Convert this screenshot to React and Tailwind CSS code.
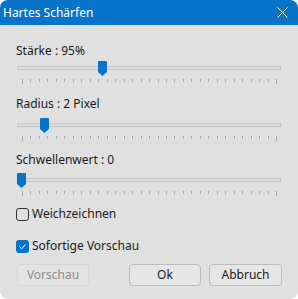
import React, { useState } from 'react';

const TICKS = Array.from({ length: 31 }, (_, i) => i);

const Slider = ({ label, thumbX, labelClass }) => {
  return (
    <div>
      <div className={`pl-[16px] h-[16px] text-[12px] leading-[16px] text-[#1a1a1a] ${labelClass}`}>{label}</div>
      <div className="relative h-[24px] w-[298px]">
        <div className="absolute left-[17px] top-[5px] h-[4px] w-[264px] border border-[#c6c6c6] bg-[#dadada]" />
        {TICKS.map((i) => (
          <div
            key={i}
            className="absolute top-[18px] w-px bg-[#a9a9a9]"
            style={{ left: 22 + Math.round(i * 8.47), height: i === 0 || i === 30 ? 5 : 3 }}
          />
        ))}
        <svg className="absolute top-0" style={{ left: thumbX }} width="9" height="15" viewBox="0 0 9 15">
          <path d="M1 0 H8 Q9 0 9 1 V11 L4.5 15 L0 11 V1 Q0 0 1 0 Z" fill="#0773c9" />
        </svg>
      </div>
    </div>
  );
};

const Checkbox = ({ checked, onChange, label }) => (
  <label className="flex items-center h-[16px] cursor-default" onClick={onChange}>
    <span
      className={`ml-[16px] w-[13px] h-[13px] rounded-[3px] flex items-center justify-center ${
        checked ? 'bg-[#0773c9]' : 'border border-[#333333] bg-[#e0e0e0]'
      }`}
    >
      {checked && (
        <svg width="9" height="9" viewBox="0 0 9 9">
          <path d="M1.5 4.8 L3.6 6.8 L7.6 2.4" fill="none" stroke="#ffffff" strokeWidth="1" />
        </svg>
      )}
    </span>
    <span className="ml-[3px] text-[12px] leading-[16px] text-[#1a1a1a]">{label}</span>
  </label>
);

const App = () => {
  const [soft, setSoft] = useState(false);
  const [preview, setPreview] = useState(true);

  return (
    <div className="w-[298px] h-[299px] bg-white" style={{ fontFamily: '"Noto Sans", "Open Sans", sans-serif' }}>
      <div className="w-[298px] h-[299px] rounded-[8px] overflow-hidden bg-[#e0e0e0] flex flex-col">
        <header className="h-[25px] bg-[#0773c9] flex items-center justify-between pl-[3px] pr-[10px]">
          <span className="text-[12px] text-white leading-[16px]">Hartes Schärfen</span>
          <svg width="11" height="11" viewBox="0 0 11 11">
            <path d="M0.5 0.5 L10.5 10.5 M10.5 0.5 L0.5 10.5" stroke="#ffffff" strokeWidth="1" />
          </svg>
        </header>

        <div className="pt-[18px]">
          <Slider label="Stärke : 95%" thumbX={98} labelClass="mb-[2px]" />
        </div>
        <div className="pt-[11px]">
          <Slider label="Radius : 2 Pixel" thumbX={40} labelClass="mb-[6px]" />
        </div>
        <div className="pt-[10px]">
          <Slider label="Schwellenwert : 0" thumbX={17} labelClass="mb-[5px]" />
        </div>

        <div className="mt-[9px]">
          <Checkbox checked={soft} onChange={() => setSoft(!soft)} label="Weichzeichnen" />
        </div>
        <div className="mt-[16px]">
          <Checkbox checked={preview} onChange={() => setPreview(!preview)} label="Sofortige Vorschau" />
        </div>

        <footer className="mt-[10px] flex pl-[17px]">
          <button
            disabled
            className="w-[72px] h-[22px] rounded-[4px] border border-[#d6d6d6] bg-[#e3e3e3] text-[12px] text-[#8c8c8c]"
          >
            Vorschau
          </button>
          <button className="ml-[40px] w-[72px] h-[22px] rounded-[4px] border border-[#bcbcbc] bg-[#e6e6e6] text-[12px] text-[#1a1a1a]">
            Ok
          </button>
          <button className="ml-[8px] w-[73px] h-[22px] rounded-[4px] border border-[#bcbcbc] bg-[#e6e6e6] text-[12px] text-[#1a1a1a]">
            Abbruch
          </button>
        </footer>
      </div>
    </div>
  );
};

export default App;
